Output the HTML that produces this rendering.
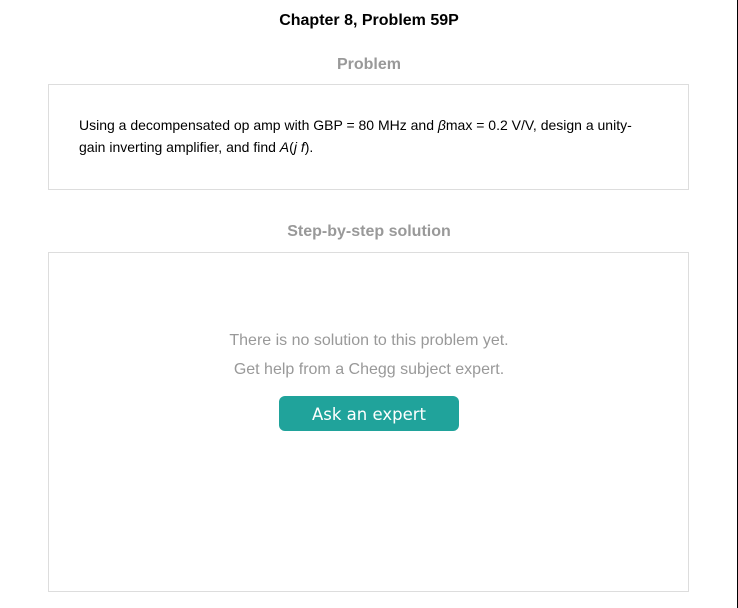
<!DOCTYPE html>
<html><head><style>
body{margin:0;width:738px;height:608px;background:#fff;position:relative;overflow:hidden;font-family:"Liberation Sans",Arial,sans-serif}
.edge{position:absolute;left:737px;top:0;width:1px;height:608px;background:#000}
.t{position:absolute;left:0;width:738px;text-align:center}
.box{position:absolute;left:48px;width:639px;border:1px solid #ddd}
.btn{position:absolute;left:279px;top:396px;width:180px;height:35px;background:#20a39b;border-radius:6px;color:#fff;font-family:"DejaVu Sans",sans-serif;font-size:16.5px;text-align:center;line-height:38px}
</style></head><body>
<div class="edge"></div>
<div class="t" style="top:12px;font-weight:bold;font-size:16px;color:#000">Chapter 8, Problem 59P</div>
<div class="t" style="top:56px;font-weight:bold;font-size:16px;color:#999">Problem</div>
<div class="box" style="top:84px;height:104px">
<div style="position:absolute;left:30px;top:29px;width:570px;font-size:14px;line-height:22px;color:#000">Using a decompensated op amp with GBP = 80 MHz and <i>β</i>max = 0.2 V/V, design a unity-gain inverting amplifier, and find <i>A</i>(<i>j f</i>).</div>
</div>
<div class="t" style="top:223px;font-weight:bold;font-size:16px;color:#999">Step-by-step solution</div>
<div class="box" style="top:252px;height:338px"></div>
<div class="t" style="top:332px;font-size:16px;color:#999">There is no solution to this problem yet.</div>
<div class="t" style="top:361px;font-size:16px;color:#999">Get help from a Chegg subject expert.</div>
<div class="btn">Ask an expert</div>
</body></html>
